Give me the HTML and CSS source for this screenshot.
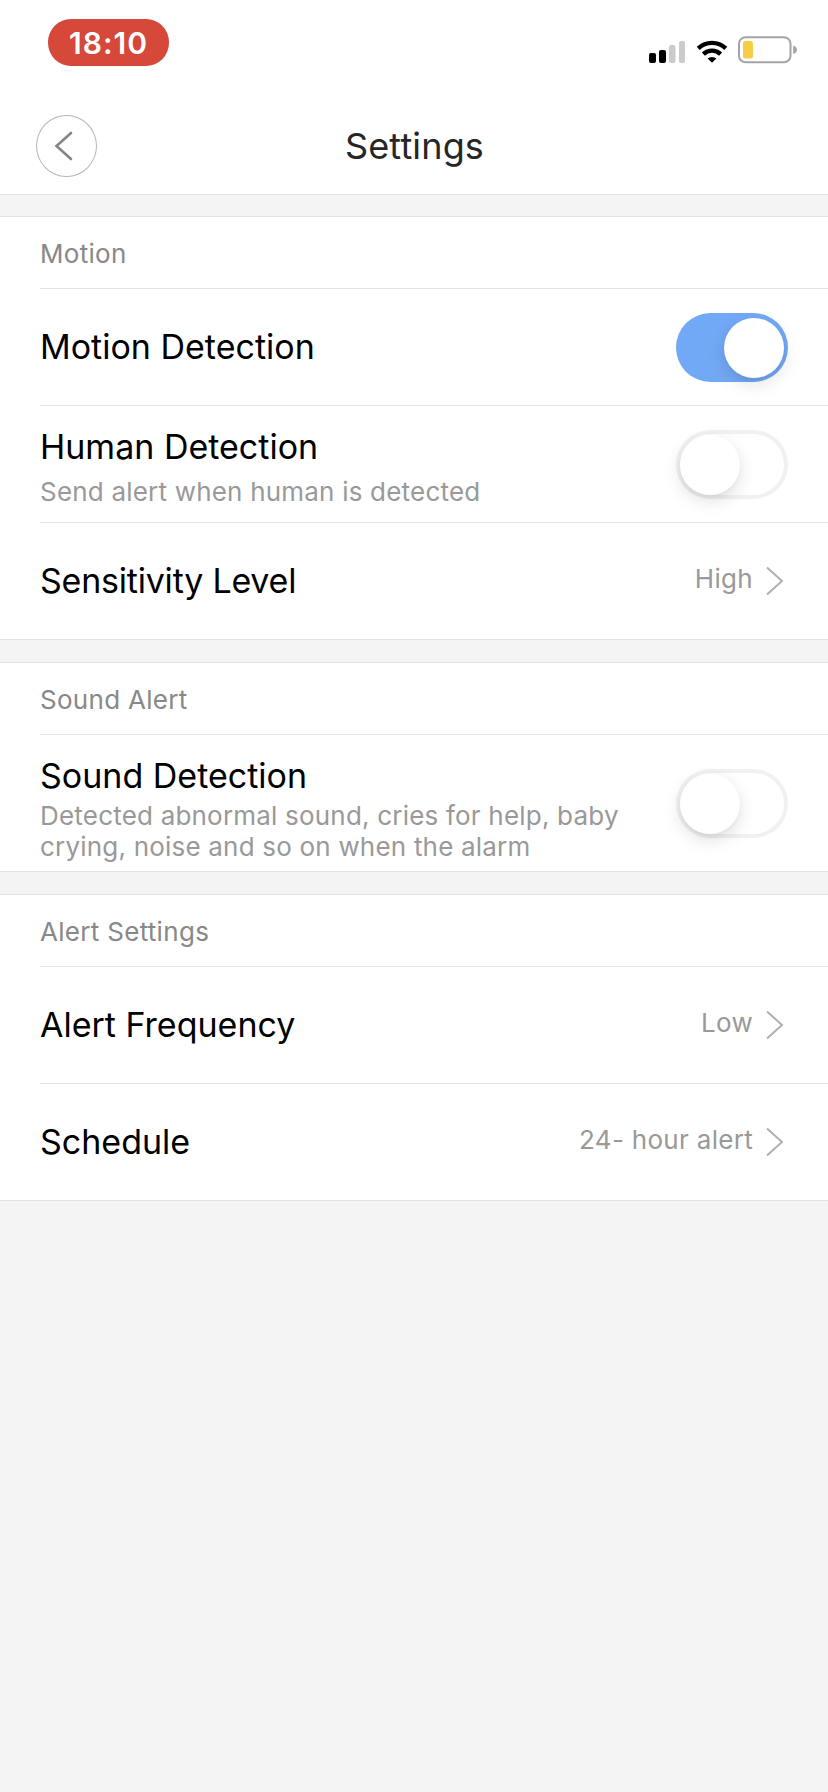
FILE: index.html
```
<!DOCTYPE html>
<html lang="en">
<head>
    <meta charset="UTF-8">
    <meta name="viewport" content="width=device-width, initial-scale=1.0">
    <title>Settings</title>
    <link rel="stylesheet" href="styles.css">
</head>
<body>
    <!-- Status bar -->
    <div class="status-bar">
        <span class="time">18:10</span>
        <svg class="status-icons" width="150" height="30" viewBox="0 0 150 30">
            <!-- signal -->
            <rect x="1" y="17" width="7" height="10" rx="2" fill="#000"/>
            <rect x="11" y="14" width="7" height="13" rx="2" fill="#000"/>
            <rect x="21" y="9" width="6.5" height="18" rx="2" fill="#cbcbcb"/>
            <rect x="31" y="5" width="6" height="22" rx="2" fill="#cbcbcb"/>
            <!-- wifi -->
            <g fill="none" stroke="#000" stroke-width="4.4">
                <path d="M50.2 12.4a20 20 0 0 1 27.6 0"/>
                <path d="M55.4 18.1a12.5 12.5 0 0 1 17.2 0"/>
            </g>
            <path d="M64 26.8l-4.4-4.2a6.5 6.5 0 0 1 8.8 0z" fill="#000"/>
            <!-- battery -->
            <rect x="91" y="1.2" width="51.5" height="25" rx="6.5" fill="none" stroke="#a4a4a4" stroke-width="2"/>
            <rect x="95" y="5" width="10" height="17.5" rx="2.5" fill="#f6cd45"/>
            <path d="M145.2 9.5c2.4 .7 3.8 2.3 3.8 4.3s-1.4 3.6-3.8 4.3z" fill="#a4a4a4"/>
        </svg>
    </div>

    <!-- Header -->
    <div class="header">
        <button class="back-button" aria-label="Back">
            <svg width="20" height="32" viewBox="0 0 20 32">
                <path d="M17 3L2.5 16L17 29" fill="none" stroke="#858585" stroke-width="2.6" stroke-linecap="round"/>
            </svg>
        </button>
        <h1>Settings</h1>
    </div>

    <!-- Motion -->
    <div class="section">
        <h2>Motion</h2>
        <div class="row">
            <div class="label">Motion Detection</div>
            <div class="toggle on"><div class="knob"></div></div>
        </div>
        <div class="row">
            <div class="texts">
                <div class="label">Human Detection</div>
                <p>Send alert when human is detected</p>
            </div>
            <div class="toggle"><div class="knob"></div></div>
        </div>
        <div class="row">
            <div class="label tight">Sensitivity Level</div>
            <span class="value">High</span>
            <svg class="arrow" width="20" height="32" viewBox="0 0 20 32">
                <path d="M2 2.5L17 16L2 29.5" fill="none" stroke="#b0b0b0" stroke-width="2"/>
            </svg>
        </div>
    </div>

    <!-- Sound -->
    <div class="section">
        <h2>Sound Alert</h2>
        <div class="row tall">
            <div class="texts">
                <div class="label">Sound Detection</div>
                <p>Detected abnormal sound, cries for help, baby crying, noise and so on when the alarm</p>
            </div>
            <div class="toggle"><div class="knob"></div></div>
        </div>
    </div>

    <!-- Alert settings -->
    <div class="section">
        <h2>Alert Settings</h2>
        <div class="row">
            <div class="label">Alert Frequency</div>
            <span class="value">Low</span>
            <svg class="arrow" width="20" height="32" viewBox="0 0 20 32">
                <path d="M2 2.5L17 16L2 29.5" fill="none" stroke="#b0b0b0" stroke-width="2"/>
            </svg>
        </div>
        <div class="row">
            <div class="label">Schedule</div>
            <span class="value">24- hour alert</span>
            <svg class="arrow" width="20" height="32" viewBox="0 0 20 32">
                <path d="M2 2.5L17 16L2 29.5" fill="none" stroke="#b0b0b0" stroke-width="2"/>
            </svg>
        </div>
    </div>
</body>
</html>
```
FILE: styles.css
```
/* General */
* {
    box-sizing: border-box;
}

body {
    margin: 0;
    min-height: 100vh;
    background: #f4f4f4;
    font-family: Inter, "Liberation Sans", sans-serif;
    color: #000;
}

h1, h2, p {
    margin: 0;
    font-weight: 400;
}

/* Status bar */
.status-bar {
    display: flex;
    justify-content: space-between;
    align-items: flex-start;
    height: 97px;
    padding: 19px 30px 0 48px;
    background: #fff;
}

.time {
    width: 121px;
    height: 47px;
    border-radius: 23px;
    background: #d5483a;
    color: #fff;
    font-size: 30px;
    font-weight: 600;
    line-height: 48px;
    letter-spacing: 1px;
    text-align: center;
}

.status-icons {
    margin-top: 17px;
}

/* Header */
.header {
    display: grid;
    grid-template-columns: 62px 1fr 62px;
    align-items: center;
    height: 98px;
    padding: 0 36px;
    background: #fff;
    border-bottom: 1px solid #e2e2e2;
}

.back-button {
    display: flex;
    justify-content: center;
    align-items: center;
    width: 61px;
    height: 62px;
    padding: 0 6px 0 0;
    border: 1px solid #b5b5b5;
    border-radius: 50%;
    background: none;
}

.header h1 {
    padding-left: 1px;
    font-size: 36px;
    line-height: 44px;
    letter-spacing: 0.15px;
    color: #262626;
    text-align: center;
}

/* Sections */
.section {
    margin-top: 22px;
    padding-left: 40px;
    background: #fff;
    border-top: 1px solid #e2e2e2;
    border-bottom: 1px solid #e2e2e2;
}

.header + .section {
    margin-top: 21px;
}

.section h2 {
    height: 72px;
    font-size: 26px;
    line-height: 73px;
    letter-spacing: 0.3px;
    color: #888;
    border-bottom: 1px solid #e2e2e2;
}

.row {
    display: flex;
    align-items: center;
    height: 117px;
    padding-right: 40px;
    border-bottom: 1px solid #e2e2e2;
}

.row:last-child {
    height: 116px;
    border-bottom: none;
}

.row.tall {
    height: 136px;
}

.label {
    flex: 1;
    font-size: 34px;
    line-height: 42px;
}

.label.tight {
    letter-spacing: -0.22px;
}

.texts {
    flex: 1;
    padding-top: 4px;
}

.texts p {
    margin-top: 8px;
    font-size: 26px;
    line-height: 31px;
    letter-spacing: 0.2px;
    color: #999;
}

.tall .texts {
    padding-top: 10px;
}

.tall .texts p {
    width: 600px;
    margin-top: 3px;
}

.value {
    margin: 0 12px 5px 0;
    font-size: 26px;
    letter-spacing: 0.3px;
    color: #999;
}

.arrow {
    margin-right: 3px;
}

/* Toggle */
.toggle {
    flex: none;
    width: 112px;
    height: 69px;
    padding: 5px 4px;
    border-radius: 35px;
    box-shadow: inset 0 0 0 4px #f1f1f1;
}

.toggle.on {
    background: #72a9f6;
    box-shadow: none;
}

.knob {
    width: 60px;
    height: 60px;
    border-radius: 50%;
    background: #fff;
    box-shadow: 0 6px 18px rgba(0, 0, 0, 0.12), 0 3px 4px rgba(0, 0, 0, 0.03);
}

.on .knob {
    margin-left: auto;
}
```
